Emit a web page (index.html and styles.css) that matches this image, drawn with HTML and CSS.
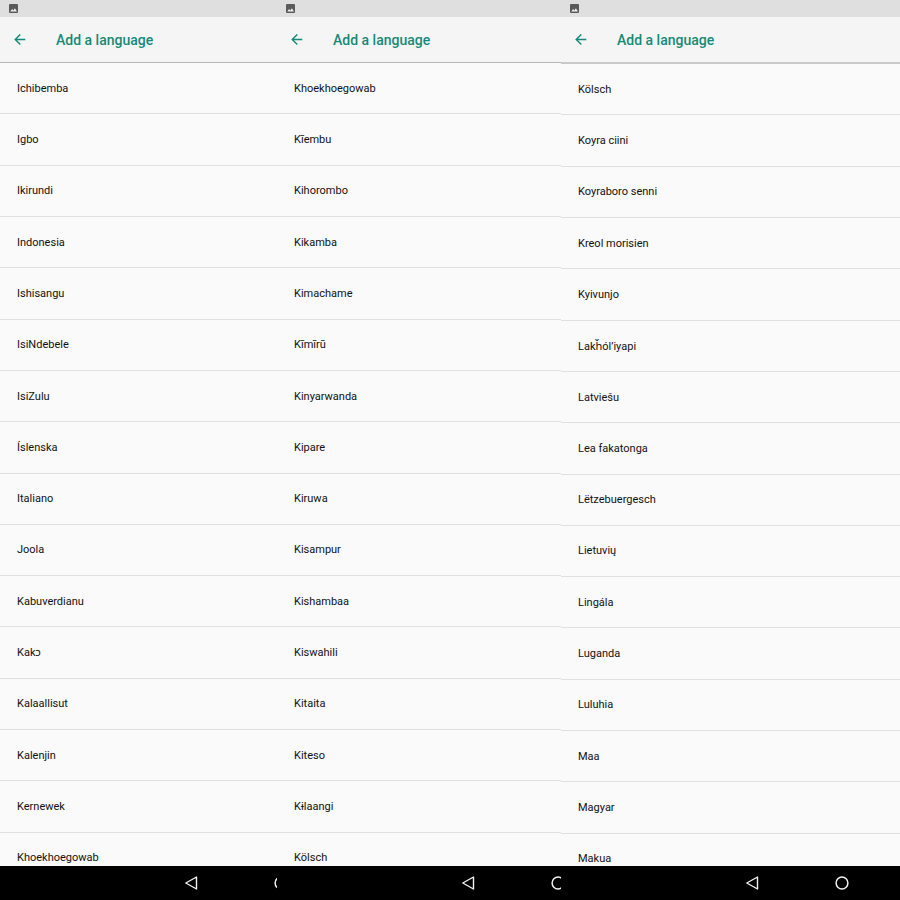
FILE: index.html
```html
<!DOCTYPE html>
<html lang="en">
<head>
    <meta charset="UTF-8">
    <meta name="viewport" content="width=device-width, initial-scale=1.0">
    <title>Add a language</title>
    <link rel="stylesheet" href="styles.css">
</head>
<body>
    <!-- Shared icons -->
    <svg class="sprite" aria-hidden="true">
        <symbol id="icon-picture" viewBox="0 0 9 9">
            <path fill="#5a5a5a" d="M1 0h7a1 1 0 0 1 1 1v7a1 1 0 0 1-1 1H1a1 1 0 0 1-1-1V1a1 1 0 0 1 1-1z"/>
            <path fill="#f0f0f0" d="M1.3 7.4 3.1 5l1.2 1.5L5.9 4.3l2 3.1z"/>
        </symbol>
        <symbol id="icon-arrow" viewBox="0 0 12 12">
            <path fill="none" stroke="currentColor" stroke-width="1.4" d="M11.3 5.5H1.4M6.3 .4 1.2 5.5l5.1 5.1"/>
        </symbol>
        <symbol id="icon-back" viewBox="0 0 14 14">
            <path fill="none" stroke="currentColor" stroke-width="1.4" stroke-linejoin="round" d="M12.5 1v12L1.8 7z"/>
        </symbol>
        <symbol id="icon-home" viewBox="0 0 14 14">
            <circle cx="7" cy="7" r="5.9" fill="none" stroke="currentColor" stroke-width="1.5"/>
        </symbol>
    </svg>

    <main class="screens">
        <section class="screen">
            <div class="statusBar"><svg><use href="#icon-picture"/></svg></div>
            <header class="appBar">
                <button type="button" class="backButton" aria-label="Navigate up"><svg><use href="#icon-arrow"/></svg></button>
                <h1>Add a language</h1>
            </header>
            <div class="content">
                <ul class="languageList">
                    <li><button type="button">Ichibemba</button></li>
                    <li><button type="button">Igbo</button></li>
                    <li><button type="button">Ikirundi</button></li>
                    <li><button type="button">Indonesia</button></li>
                    <li><button type="button">Ishisangu</button></li>
                    <li><button type="button">IsiNdebele</button></li>
                    <li><button type="button">IsiZulu</button></li>
                    <li><button type="button">Íslenska</button></li>
                    <li><button type="button">Italiano</button></li>
                    <li><button type="button">Joola</button></li>
                    <li><button type="button">Kabuverdianu</button></li>
                    <li><button type="button">Kakɔ</button></li>
                    <li><button type="button">Kalaallisut</button></li>
                    <li><button type="button">Kalenjin</button></li>
                    <li><button type="button">Kernewek</button></li>
                    <li><button type="button">Khoekhoegowab</button></li>
                </ul>
            </div>
            <nav class="navBar">
                <button type="button" aria-label="Back"><svg><use href="#icon-back"/></svg></button>
                <button type="button" aria-label="Home"><svg><use href="#icon-home"/></svg></button>
            </nav>
        </section>

        <section class="screen">
            <div class="statusBar"><svg><use href="#icon-picture"/></svg></div>
            <header class="appBar">
                <button type="button" class="backButton" aria-label="Navigate up"><svg><use href="#icon-arrow"/></svg></button>
                <h1>Add a language</h1>
            </header>
            <div class="content">
                <ul class="languageList">
                    <li><button type="button">Khoekhoegowab</button></li>
                    <li><button type="button">Kĩembu</button></li>
                    <li><button type="button">Kihorombo</button></li>
                    <li><button type="button">Kikamba</button></li>
                    <li><button type="button">Kimachame</button></li>
                    <li><button type="button">Kĩmĩrũ</button></li>
                    <li><button type="button">Kinyarwanda</button></li>
                    <li><button type="button">Kipare</button></li>
                    <li><button type="button">Kiruwa</button></li>
                    <li><button type="button">Kisampur</button></li>
                    <li><button type="button">Kishambaa</button></li>
                    <li><button type="button">Kiswahili</button></li>
                    <li><button type="button">Kitaita</button></li>
                    <li><button type="button">Kiteso</button></li>
                    <li><button type="button">Kɨlaangi</button></li>
                    <li><button type="button">Kölsch</button></li>
                </ul>
            </div>
            <nav class="navBar">
                <button type="button" aria-label="Back"><svg><use href="#icon-back"/></svg></button>
                <button type="button" aria-label="Home"><svg><use href="#icon-home"/></svg></button>
            </nav>
        </section>

        <section class="screen screenLast">
            <div class="statusBar"><svg><use href="#icon-picture"/></svg></div>
            <header class="appBar">
                <button type="button" class="backButton" aria-label="Navigate up"><svg><use href="#icon-arrow"/></svg></button>
                <h1>Add a language</h1>
            </header>
            <div class="content">
                <ul class="languageList">
                    <li><button type="button">Kölsch</button></li>
                    <li><button type="button">Koyra ciini</button></li>
                    <li><button type="button">Koyraboro senni</button></li>
                    <li><button type="button">Kreol morisien</button></li>
                    <li><button type="button">Kyivunjo</button></li>
                    <li><button type="button">Lak<span class="extended">ȟ</span>ólʼiyapi</button></li>
                    <li><button type="button">Latviešu</button></li>
                    <li><button type="button">Lea fakatonga</button></li>
                    <li><button type="button">Lëtzebuergesch</button></li>
                    <li><button type="button">Lietuvių</button></li>
                    <li><button type="button">Lingála</button></li>
                    <li><button type="button">Luganda</button></li>
                    <li><button type="button">Luluhia</button></li>
                    <li><button type="button">Maa</button></li>
                    <li><button type="button">Magyar</button></li>
                    <li><button type="button">Makua</button></li>
                </ul>
            </div>
            <nav class="navBar">
                <button type="button" aria-label="Back"><svg><use href="#icon-back"/></svg></button>
                <button type="button" aria-label="Home"><svg><use href="#icon-home"/></svg></button>
            </nav>
        </section>
    </main>
</body>
</html>
```

FILE: styles.css
```css
* {
  box-sizing: border-box;
  list-style: none;
  margin: 0;
  padding: 0;
}

body {
  background-color: #fafafa;
  color: #111;
  font-family: Roboto, "Noto Sans", sans-serif;
  font-size: 11px;
}

button {
  background: none;
  border: none;
  color: inherit;
  cursor: pointer;
  font: inherit;
}

svg {
  display: block;
}

.sprite {
  position: absolute;
  width: 0;
  height: 0;
}

.screens {
  display: grid;
  grid-template-columns: 277fr 284fr 339fr;
  height: 100vh;
}

.screen {
  display: flex;
  flex-direction: column;
  min-width: 0;
  min-height: 0;
  overflow: hidden;
}

.statusBar {
  flex: none;
  height: 17px;
  padding: 4px 9px;
  background-color: #dfdfdf;
}

.statusBar svg {
  width: 9px;
  height: 9px;
}

.appBar {
  flex: none;
  display: flex;
  align-items: center;
  gap: 30px;
  height: 46px;
  padding-left: 14px;
  background-color: #f5f5f5;
  border-bottom: 1px solid #b4b8b7;
  color: #168a78;
}

.screenLast .appBar {
  height: 47px;
  border-bottom: 2px solid #c8cac9;
}

.backButton svg {
  width: 12px;
  height: 12px;
}

.appBar h1 {
  font-size: 14px;
  font-weight: 500;
  line-height: 20px;
  white-space: nowrap;
}

.content {
  flex: 1;
  min-height: 0;
  overflow: hidden;
}

/* sixteen equal rows, the last one runs under the nav bar */
.languageList {
  display: grid;
  grid-auto-rows: 1fr;
  height: 821px;
}

.languageList li {
  display: flex;
  border-bottom: 1px solid #e0e0e0;
}

.languageList button {
  flex: 1;
  padding-top: 1px;
  padding-left: 17px;
  line-height: 16px;
  text-align: left;
}

/* letters that Roboto has no glyph for */
.extended {
  font-family: "Noto Sans", sans-serif;
}

.navBar {
  flex: none;
  display: flex;
  align-items: center;
  gap: 76px;
  height: 34px;
  padding-left: 184px;
  background-color: #000;
  color: #f2f2f2;
  overflow: hidden;
}

.navBar button {
  flex: none;
}

.navBar svg {
  width: 14px;
  height: 14px;
}
```
